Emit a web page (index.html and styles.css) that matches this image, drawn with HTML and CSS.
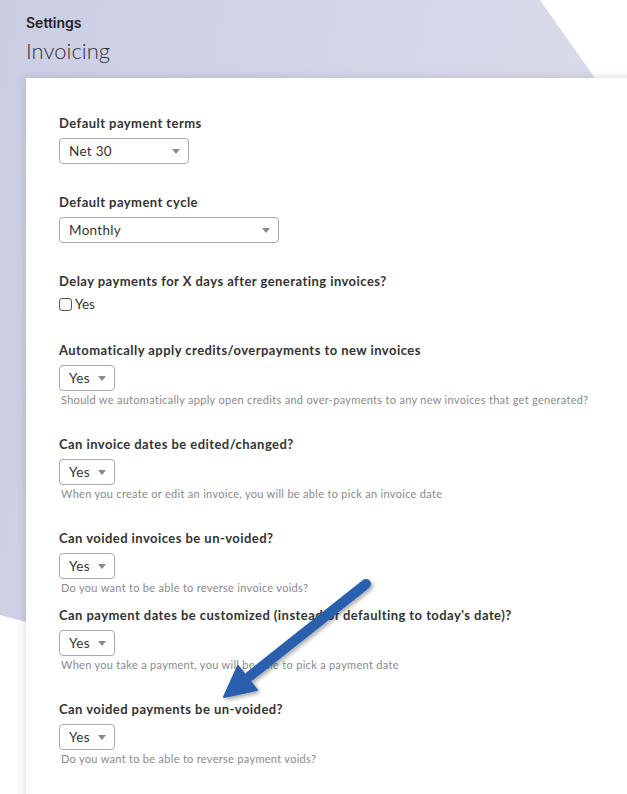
FILE: index.html
```html
<!DOCTYPE html>
<html lang="en">
<head>
  <meta charset="UTF-8">
  <meta name="viewport" content="width=device-width, initial-scale=1.0">
  <title>Settings - Invoicing</title>
  <link rel="stylesheet" href="styles.css">
</head>
<body>
  <div class="backdrop"></div>

  <header class="page-header">
    <div class="crumb">Settings</div>
    <h1>Invoicing</h1>
  </header>

  <main class="card">
    <div class="field">
      <label for="paymentTerms">Default payment terms</label>
      <div class="select-wrap select-md">
        <select id="paymentTerms"><option>Net 30</option></select>
      </div>
    </div>

    <div class="field">
      <label for="paymentCycle">Default payment cycle</label>
      <div class="select-wrap select-lg">
        <select id="paymentCycle"><option>Monthly</option></select>
      </div>
    </div>

    <div class="field">
      <label>Delay payments for X days after generating invoices?</label>
      <div class="check-row">
        <input type="checkbox" id="delayPayments">
        <span>Yes</span>
      </div>
    </div>

    <div class="field">
      <label for="applyCredits">Automatically apply credits/overpayments to new invoices</label>
      <div class="select-wrap select-sm">
        <select id="applyCredits"><option>Yes</option></select>
      </div>
      <p class="hint">Should we automatically apply open credits and over-payments to any new invoices that get generated?</p>
    </div>

    <div class="field">
      <label for="editDates">Can invoice dates be edited/changed?</label>
      <div class="select-wrap select-sm">
        <select id="editDates"><option>Yes</option></select>
      </div>
      <p class="hint">When you create or edit an invoice, you will be able to pick an invoice date</p>
    </div>

    <div class="field compact">
      <label for="unvoidInvoices">Can voided invoices be un-voided?</label>
      <div class="select-wrap select-sm">
        <select id="unvoidInvoices"><option>Yes</option></select>
      </div>
      <p class="hint">Do you want to be able to reverse invoice voids?</p>
    </div>

    <div class="field">
      <label for="paymentDates">Can payment dates be customized (instead of defaulting to today's date)?</label>
      <div class="select-wrap select-sm">
        <select id="paymentDates"><option>Yes</option></select>
      </div>
      <p class="hint">When you take a payment, you will be able to pick a payment date</p>
    </div>

    <div class="field">
      <label for="unvoidPayments">Can voided payments be un-voided?</label>
      <div class="select-wrap select-sm">
        <select id="unvoidPayments"><option>Yes</option></select>
      </div>
      <p class="hint">Do you want to be able to reverse payment voids?</p>
    </div>
  </main>

  <!-- annotation arrow on top of the screenshot -->
  <svg class="arrow" width="627" height="794" viewBox="0 0 627 794">
    <defs>
      <filter id="arrowShadow" x="-20%" y="-20%" width="140%" height="140%">
        <feDropShadow dx="2" dy="2" stdDeviation="2" flood-color="#000" flood-opacity="0.35"/>
      </filter>
    </defs>
    <g filter="url(#arrowShadow)" fill="#2c5fae" stroke="#2c5fae">
      <line x1="366" y1="584" x2="250" y2="676" stroke-width="10" stroke-linecap="round"/>
      <polygon points="224,697 238,666 257,690" stroke-width="2" stroke-linejoin="round"/>
    </g>
  </svg>
</body>
</html>
```

FILE: styles.css
```css
html, body {
  overflow: hidden;
}
body {
  font-family: Lato, "Open Sans", Arial, sans-serif;
  margin: 0;
  padding: 0;
  position: relative;
  height: 794px;
  background-color: #fff;
  color: #333;
}
.backdrop {
  position: absolute;
  top: 0;
  left: 0;
  width: 640px;
  height: 640px;
  background: linear-gradient(100deg, #cbcee3 0%, #d6d8e9 60%, #dcdeec 100%);
  clip-path: polygon(0 0, 540px 0, 640px 142px, 640px 640px, 26px 622px, 0 615px);
}
.page-header {
  position: relative;
  padding: 14px 26px 0;
}
.crumb {
  font-family: Inter, Lato, sans-serif;
  font-size: 14px;
  line-height: 18px;
  font-weight: 600;
  color: #222;
}
.page-header h1 {
  margin: 6px 0 0;
  font-size: 22px;
  line-height: 26px;
  font-weight: 300;
  color: #333;
}
.card {
  position: relative;
  display: block;
  margin: 14px -40px 0 26px;
  padding: 37px 33px 60px;
  background: #fff;
  box-shadow: 0 0 9px rgba(40, 44, 80, 0.18);
}
.field {
  margin-bottom: 30px;
}
.field.compact {
  margin-bottom: 13px;
}
.field label {
  display: block;
  margin-bottom: 7px;
  font-size: 13px;
  line-height: 16px;
  font-weight: bold;
  letter-spacing: 0.45px;
  color: #333;
}
.select-wrap {
  position: relative;
  height: 26px;
}
.select-sm { width: 56px; }
.select-md { width: 130px; }
.select-lg { width: 220px; }
.select-wrap select {
  -webkit-appearance: none;
  appearance: none;
  width: 100%;
  height: 26px;
  margin: 0;
  padding: 0 20px 0 9px;
  font-family: inherit;
  font-size: 13.5px;
  letter-spacing: 0.3px;
  color: #333;
  background: #fff;
  border: 1px solid #a9a9a9;
  border-radius: 4px;
}
.select-wrap::after {
  content: "";
  position: absolute;
  right: 9px;
  top: 11px;
  border-left: 4px solid transparent;
  border-right: 4px solid transparent;
  border-top: 5px solid #8a8a8a;
  pointer-events: none;
}
.check-row {
  display: flex;
  align-items: center;
  height: 16px;
  font-size: 13.5px;
}
.check-row input {
  -webkit-appearance: none;
  appearance: none;
  width: 13px;
  height: 13px;
  margin: 0 3px 0 0;
  border: 1px solid #555;
  border-radius: 3px;
  background: #fff;
}
.hint {
  margin: 2px 0 0 2px;
  font-size: 11px;
  line-height: 13px;
  letter-spacing: 0.3px;
  color: #8a8a8a;
}
.arrow {
  position: absolute;
  top: 0;
  left: 0;
  pointer-events: none;
}
```
